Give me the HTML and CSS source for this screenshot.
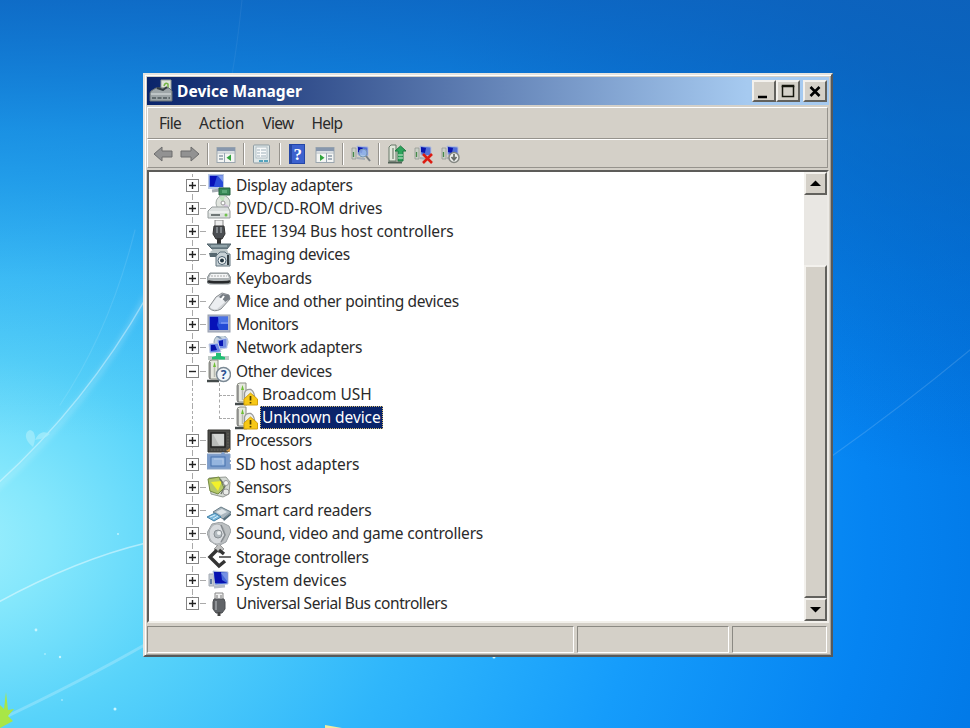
FILE: index.html
```html
<!DOCTYPE html>
<html lang="en">
<head>
<meta charset="utf-8">
<title>Device Manager</title>
<link rel="stylesheet" href="styles.css">
</head>
<body>
<svg class="wallpaper" viewBox="0 0 970 728" fill="none">
  <defs>
    <filter id="soft" x="-20%" y="-20%" width="140%" height="140%"><feGaussianBlur stdDeviation="2.5"/></filter>
    <filter id="fine" x="-20%" y="-20%" width="140%" height="140%"><feGaussianBlur stdDeviation=".6"/></filter>
  </defs>
  <g stroke="#fff" stroke-linecap="round">
    <path d="M-5 490Q90 405 145 298" stroke-opacity=".18" stroke-width="5" filter="url(#soft)"/>
    <path d="M-5 486Q85 405 146 298" stroke-opacity=".38" stroke-width="1.5" filter="url(#fine)"/>
    <path d="M60 405Q110 330 135 230" stroke-opacity=".1" stroke-width="1.2"/>
    <path d="M-5 604Q75 560 146 543" stroke-opacity=".45" stroke-width="1.5" filter="url(#fine)"/>
    <path d="M-5 722Q80 682 148 643" stroke-opacity=".22" stroke-width="3" filter="url(#fine)"/>
    <path d="M832 456Q900 408 970 350" stroke-opacity=".14" stroke-width="1.2"/>
    <path d="M232 75Q238 40 242 0" stroke-opacity=".06" stroke-width="1.2"/>
  </g>
  <g fill="#a5ecfb" fill-opacity=".75">
    <path d="M33 447C24 440 24 432 30 430C36 431 36 440 33 447Z"/>
    <path d="M35 440C39 431 45 431 50 434C46 438 41 439 35 440Z"/>
  </g>
  <g fill="#c8f6ff"><circle cx="36" cy="630" r="1.4"/><circle cx="60" cy="657" r="1.2"/><circle cx="45" cy="654" r=".8"/><circle cx="115" cy="709" r="1.5"/><circle cx="62" cy="700" r=".8"/><circle cx="118" cy="534" r=".9"/><circle cx="494" cy="657" r="1.5"/></g>
  <path d="M0 705L4 709L6 692L8 710L14 709L8 716L13 721L0 728Z" fill="#a8e647"/>
  <path d="M325 728V725L342 728Z" fill="#f3e9a0"/>
</svg>

<svg class="defs">
  <symbol id="plus" viewBox="0 0 13 13"><rect x=".5" y=".5" width="12" height="12" fill="#fff" stroke="#858585"/><path d="M3 6.5H10M6.5 3V10" stroke="#222" stroke-width="1.4"/></symbol>
  <symbol id="minus" viewBox="0 0 13 13"><rect x=".5" y=".5" width="12" height="12" fill="#fff" stroke="#858585"/><path d="M3 6.5H10" stroke="#222" stroke-width="1.4"/></symbol>
  <symbol id="tower" viewBox="0 0 24 24"><path d="M2 4Q2 1 5 1H11V20H4Q2 20 2 18Z" fill="#e6e8df" stroke="#8b8e84"/><path d="M3 3V20" stroke="#777" stroke-width="1.3"/><path d="M7.500 3L9 8H6Z" fill="#6ebe35"/><path d="M7.500 8V18" stroke="#b7bbb0" stroke-width="1.500"/><path d="M0 22H12" stroke="#444b4b" stroke-width="2.500"/></symbol>
  <symbol id="warn" viewBox="0 0 24 24"><use href="#tower"/><path d="M9.500 20V11Q11 6.500 16 7.500Q20 9.500 20 20" fill="#eceee9" stroke="#999" stroke-width="1.300"/><path d="M15.500 11L22.500 17V23H9V17Z" fill="#f7c815" stroke="#d0a010"/><path d="M15.500 14V18.500M15.500 20V21.500" stroke="#504000" stroke-width="1.700"/></symbol>
  <symbol id="pc" viewBox="0 0 20 20"><path d="M1 4H5V15H1Z" fill="#c9cfc6" stroke="#8e948e" stroke-width=".7"/><path d="M2.500 8V13" stroke="#478a4a" stroke-width="1.300"/><path d="M6 2L17 3V12L7 11Z" fill="#5471d8" stroke="#b6bfd9"/><path d="M7 3L12 4L11 9L7 8Z" fill="#0a14ad"/><path d="M6 14L14 15" stroke="#a6aeb6" stroke-width="2"/></symbol>
</svg>

<main class="window">
  <header class="titlebar">
    <svg class="app-icon" viewBox="0 0 24 24"><path d="M12 1H22V20H12Z" fill="#dfe4d8" stroke="#969d96"/><path d="M15 7Q16 3 19 5V10" stroke="#75b546" stroke-width="1.500" fill="none"/><path d="M2 12L7 9H20L23 12V22H1V14Z" fill="#9da5a7" stroke="#697174"/><path d="M8 9L14 11L18 8" stroke="#333d42" stroke-width="2" fill="none"/><path d="M2 15H22" stroke="#cad0d0" stroke-width="1.500"/><path d="M3 19H21" stroke="#606a6d" stroke-width="2" stroke-dasharray="4 1.500"/></svg>
    <h1>Device Manager</h1>
    <div class="controls">
      <span class="button"><svg viewBox="0 0 20 18"><path d="M4 15H13" stroke="#000" stroke-width="2.500"/></svg></span>
      <span class="button"><svg viewBox="0 0 20 18"><path d="M4.500 4V14.500H15.500V4" stroke="#15150d" fill="none" stroke-width="1.500"/><path d="M3.700 4H16.300" stroke="#15150d" stroke-width="2.500"/></svg></span>
      <span class="button close"><svg viewBox="0 0 20 18"><path d="M5.500 5L14.500 14M14.500 5L5.500 14" stroke="#000" stroke-width="2.600"/></svg></span>
    </div>
  </header>

  <div class="bands">
    <nav class="menu"><span>File</span><span class="action">Action</span><span>View</span><span>Help</span></nav>
    <div class="toolbar">
      <svg viewBox="0 0 20 20"><path d="M1 10L9 3V7H19V13H9V17Z" fill="#929292" stroke="#6d6d6d"/></svg>
      <svg viewBox="0 0 20 20"><path d="M19 10L11 3V7H1V13H11V17Z" fill="#929292" stroke="#6d6d6d"/></svg>
      <i></i>
      <svg viewBox="0 0 20 20"><rect x="1" y="3.500" width="18" height="15" fill="#f4f5f3" stroke="#9aa5ae"/><path d="M1 5.500H19" stroke="#8797ad" stroke-width="3.500"/><path d="M1 9H19" stroke="#b2bac2"/><path d="M3 12H7M3 15H7" stroke="#8c9aa9" stroke-width="1.300"/><path d="M8.500 9V18" stroke="#99a8b5"/><path d="M15 10.500V17L10.500 13.700Z" fill="#31a43d"/></svg>
      <i></i>
      <svg viewBox="0 0 20 20"><rect x="1.500" y="1" width="16" height="18" rx="1" fill="#dfe8e9" stroke="#8e9ca3"/><rect x="4" y="3" width="11" height="11" fill="#f8fafa" stroke="#b2bec4"/><path d="M5 6H8M9 6H14M5 9H8M9 9H14M5 12H8M9 12H14" stroke="#9fb0ba"/><path d="M7 17H11M12 17H16" stroke="#55a4bd" stroke-width="2"/></svg>
      <i></i>
      <svg viewBox="0 0 20 20"><rect x="1.500" y=".5" width="15" height="19" fill="#3d62ce" stroke="#2446a7"/><path d="M3 1V19" stroke="#2748a4" stroke-width="2"/><text x="9.700" y="16" text-anchor="middle" class="help-mark">?</text></svg>
      <svg viewBox="0 0 20 20"><rect x="1" y="3.500" width="18" height="15" fill="#f4f5f3" stroke="#9aa5ae"/><path d="M1 5.500H19" stroke="#8797ad" stroke-width="3.500"/><path d="M1 9H19" stroke="#b2bac2"/><path d="M13 12H17M13 15H17" stroke="#8c9aa9" stroke-width="1.300"/><path d="M11.500 9V18" stroke="#99a8b5"/><path d="M5 10.500V17L9.500 13.700Z" fill="#31a43d"/></svg>
      <i></i>
      <svg viewBox="0 0 20 20"><use href="#pc"/><circle cx="12" cy="9" r="4" fill="#a6c7ec" fill-opacity=".75" stroke="#7597b6"/><path d="M15 12L19 17" stroke="#777e82" stroke-width="2"/></svg>
      <i></i>
      <svg viewBox="0 0 20 20"><path d="M2 3L4 1H9V17H2Z" fill="#e2e8dc" stroke="#667969"/><path d="M6 4V15" stroke="#9eaa9b" stroke-width="2"/><path d="M1 18.500H15" stroke="#516056" stroke-width="2"/><path d="M13.500 2L19 7H16V17H11V7H8Z" fill="#2da45c" stroke="#1c7941"/><path d="M11 11H16M11 14H16" stroke="#d4ead6"/></svg>
      <svg viewBox="0 0 20 20"><use href="#pc"/><path d="M9 10L18 19M18 10L9 19" stroke="#dc1c12" stroke-width="2.600"/></svg>
      <svg viewBox="0 0 20 20"><use href="#pc"/><circle cx="13" cy="13.500" r="5" fill="#ecedea" stroke="#858883" stroke-width="1.500"/><path d="M13 10V15M10.500 13L13 16L15.500 13" stroke="#656965" stroke-width="1.700" fill="none"/></svg>
    </div>
  </div>

  <section class="content">
    <ul class="tree">
      <li><svg class="box"><use href="#plus"/></svg><svg class="icon" viewBox="0 0 24 24"><path d="M1 1H17V16H1Z" fill="#bac9e4"/><path d="M2.500 2.500H16V14H2.500Z" fill="#294bd8"/><path d="M3 3H10L7 13H3Z" fill="#0710b9"/><path d="M11 3H16V9Z" fill="#809bed"/><path d="M5 18L13 17" stroke="#a6adb5" stroke-width="3"/><path d="M12 15H23V22H12Z" fill="#378854" stroke="#24613c"/><path d="M15 17H20V20H15Z" fill="#5aa776"/></svg><span>Display adapters</span></li>
      <li class="wide"><svg class="box"><use href="#plus"/></svg><svg class="icon" viewBox="0 0 24 24"><ellipse cx="16" cy="7" rx="7" ry="7.500" fill="#e1e5df" stroke="#a2aaa6"/><path d="M16 7L12 1L18 0Z" fill="#bfe3bc"/><path d="M16 7L22 10L18 14Z" fill="#d6c9df"/><circle cx="16" cy="7" r="2" fill="#fff" stroke="#999"/><path d="M5 11H21L23 15V22H1V15Z" fill="#dce0df" stroke="#969c9c"/><path d="M2 16H22" stroke="#fff"/><path d="M4 19H13" stroke="#707777" stroke-width="2"/><circle cx="19" cy="19" r="1.500" fill="#6fc24c"/></svg><span>DVD/CD-ROM drives</span></li>
      <li class="wide"><svg class="box"><use href="#plus"/></svg><svg class="icon" viewBox="0 0 24 24"><path d="M8 0H16V7H8Z" fill="#eee" stroke="#888"/><path d="M7 6H17L18 14L15 19H9L6 14Z" fill="#4b4e52" stroke="#333"/><path d="M10 7V13M14 7V13" stroke="#94999d" stroke-width="1.500"/><path d="M12 18V24" stroke="#333" stroke-width="4"/></svg><span>IEEE 1394 Bus host controllers</span></li>
      <li><svg class="box"><use href="#plus"/></svg><svg class="icon" viewBox="0 0 24 24"><path d="M0 1H24L20 6H5Z" fill="#71838b" stroke="#53656d"/><path d="M4 3H20" stroke="#afc1c5"/><path d="M3 9L7 6H20L22 12H5Z" fill="#bdc7c9"/><path d="M2 10H10V14H3Z" fill="#566870"/><path d="M10 12L13 9H18L20 11H23V23H9V13Z" fill="#c7d1d6" stroke="#62747e"/><path d="M21 12V22" stroke="#323d43" stroke-width="2"/><circle cx="15" cy="17.500" r="4" fill="#f2f5f5" stroke="#4b6170"/><circle cx="15" cy="17.500" r="2" fill="#22343f"/></svg><span>Imaging devices</span></li>
      <li class="wide"><svg class="box"><use href="#plus"/></svg><svg class="icon" viewBox="0 0 24 24"><path d="M3 7H21L24 12V16Q24 18 21 18H3Q0 18 0 15V12Z" fill="#aeb3b5" stroke="#8c9396"/><path d="M4 8H20L22 12H2Z" fill="#f4f5f6"/><path d="M4 10H20" stroke="#aaa" stroke-dasharray="2 1"/><path d="M1 15Q3 17 21 16L23 15" stroke="#27292b" stroke-width="2.500" fill="none"/></svg><span>Keyboards</span></li>
      <li><svg class="box"><use href="#plus"/></svg><svg class="icon" viewBox="0 0 24 24"><path d="M2 18L9 8L15 4L22 6L23 10L14 20Q7 24 2 19Z" fill="#d2d5d8" stroke="#898d91"/><path d="M15 5L22 6L23 10L18 13L12 8Z" fill="#777d83"/><path d="M10 8Q16 9 18 13L10 20Q5 21 3 18Z" fill="#eceef1"/><path d="M14 11L17 7" stroke="#fff" stroke-width="2"/></svg><span>Mice and other pointing devices</span></li>
      <li class="narrow"><svg class="box"><use href="#plus"/></svg><svg class="icon" viewBox="0 0 24 24"><rect x="1" y="2" width="22" height="17" fill="#b2b9cb" stroke="#989fae"/><path d="M2.500 3.500H21V17H2.500Z" fill="#234bd6"/><path d="M3 4H12L10 12L12 17H3Z" fill="#0611b8"/><path d="M11 4H21V11H12Z" fill="#4a72e4"/><path d="M14 9H21V11H14Z" fill="#6d8df0"/></svg><span>Monitors</span></li>
      <li><svg class="box"><use href="#plus"/></svg><svg class="icon" viewBox="0 0 24 24"><circle cx="14" cy="6" r="7" fill="#c8d5de" stroke="#91a4b4"/><path d="M10 0Q19 5 19 12" stroke="#7f95b0" stroke-width="2" fill="none"/><path d="M10 4L20 2V12L11 13Z" fill="#748fe3" stroke="#c3cfec"/><path d="M12 5L16 4V10H12Z" fill="#0616b5"/><path d="M2 8L11 7L14 16L3 17Z" fill="#6d89e7" stroke="#c6cfe1"/><path d="M4 9L8 9L10 14L4 15Z" fill="#0713aa"/><path d="M1 22H22" stroke="#c0c9c6" stroke-width="4"/><path d="M5 23.500V21L9 20V17H14V20L18 21V23.500Z" fill="#22bf74"/></svg><span>Network adapters</span></li>
      <li><svg class="box"><use href="#minus"/></svg><svg class="icon" viewBox="0 0 24 24"><use href="#tower"/><circle cx="16.500" cy="15.500" r="7" fill="#f1f6fa" stroke="#7b8994" stroke-width="1.500"/><text x="16.500" y="20" text-anchor="middle" class="question">?</text></svg><span>Other devices</span></li>
      <li class="child wide"><svg class="icon" viewBox="0 0 24 24"><use href="#warn"/></svg><span>Broadcom USH</span></li>
      <li class="child last wide"><svg class="icon" viewBox="0 0 24 24"><use href="#warn"/></svg><span class="selected">Unknown device</span></li>
      <li><svg class="box"><use href="#plus"/></svg><svg class="icon" viewBox="0 0 24 24"><path d="M1 1H23V21L21 23H1Z" fill="#4a4a47" stroke="#343431"/><path d="M4 4H18V18H4Z" fill="#b9bbb9" stroke="#20201f" stroke-width="1.500"/><path d="M6 5H17V16H12Z" fill="#d2d4d2"/><path d="M4 21H20M21 4V19" stroke="#68665c" stroke-dasharray="1.500 1.500"/><path d="M19 22L23 19V23Z" fill="#d39b4e"/></svg><span>Processors</span></li>
      <li class="wide"><svg class="box"><use href="#plus"/></svg><svg class="icon" viewBox="0 0 24 24"><path d="M0 2H14L16 0L18 2H23V6L22 7L24 9L22 11L24 13V17H0Z" fill="#7c9dcc" stroke="#8ba4c6"/><rect x="4" y="5" width="14" height="9" fill="#95b5df" stroke="#4773ad"/><path d="M7 7H16V12" stroke="#b5cce9" fill="none"/></svg><span>SD host adapters</span></li>
      <li><svg class="box"><use href="#plus"/></svg><svg class="icon" viewBox="0 0 24 24"><path d="M2 3L19 2L23 7L22 19L16 22L4 19Z" fill="#d3d8d2" stroke="#949a94"/><path d="M1 4L12 2L17 13L11 19L3 16Z" fill="#b4c769" stroke="#758a42"/><path d="M4 7L15 6L11 16Z" fill="#f2f12b"/><path d="M13 4L18 11L14 19" stroke="#6e7868" stroke-width="1.500" fill="none"/><circle cx="19" cy="8" r="2.500" fill="#f5f6f4" stroke="#999"/><circle cx="19" cy="17" r="3" fill="#e9ebe7" stroke="#999"/></svg><span>Sensors</span></li>
      <li class="mid"><svg class="box"><use href="#plus"/></svg><svg class="icon" viewBox="0 0 24 24"><path d="M6 13L14 8L24 13L16 20Z" fill="#aab7bf" stroke="#687c87"/><path d="M9 13L15 10L20 13L14 16Z" fill="#dfe6e9"/><path d="M16 20L24 14V16L17 22Z" fill="#536b78"/><path d="M0 18L8 14L14 18L7 22Z" fill="#7bb8dc" stroke="#4180a7"/><path d="M3 18L8 16M6 20L11 17" stroke="#d7effa"/></svg><span>Smart card readers</span></li>
      <li class="mid"><svg class="box"><use href="#plus"/></svg><svg class="icon" viewBox="0 0 24 24"><path d="M5 2L14 0L22 4L24 9L19 20L11 24L3 19L0 11Z" fill="#bcc0c2" stroke="#999ea1"/><ellipse cx="10" cy="12" rx="8" ry="10" fill="#d7dadd" stroke="#adb1b4"/><path d="M14 3L18 13L14 20" stroke="#858a8e" stroke-width="1.500" fill="none"/><circle cx="11" cy="12" r="4" fill="#b3babf" stroke="#888e92"/><circle cx="12" cy="11" r="2" fill="#eef0f1"/></svg><span>Sound, video and game controllers</span></li>
      <li><svg class="box"><use href="#plus"/></svg><svg class="icon" viewBox="0 0 24 24"><path d="M12 -1L17 4L12 8L7 4Z" fill="#bfc0bf" stroke="#999"/><path d="M10 5L3 12L12 21L18 16M12 5L17 9" fill="none" stroke="#343434" stroke-width="3.500"/><path d="M12 12H24" stroke="#555" stroke-width="1.700"/></svg><span>Storage controllers</span></li>
      <li class="wider"><svg class="box"><use href="#plus"/></svg><svg class="icon" viewBox="0 0 24 24"><path d="M2 6H7V18H2Z" fill="#c5cbd2" stroke="#a4abb4"/><path d="M4 11V16" stroke="#637da3" stroke-width="2"/><path d="M6 3L21 4V16L8 17Z" fill="#4568d8" stroke="#bac4da"/><path d="M7 4L14 4L15 12L20 15L8 15Z" fill="#0812b0"/><path d="M14 5L20 5V13Z" fill="#7591e4"/><path d="M7 19L18 18" stroke="#b4bdc9" stroke-width="3"/></svg><span>System devices</span></li>
      <li class="narrow"><svg class="box"><use href="#plus"/></svg><svg class="icon" viewBox="0 0 24 24"><path d="M8 1H16V8H8Z" fill="#eee" stroke="#888"/><path d="M10 3V6M14 3V6" stroke="#777"/><path d="M7 7H17L18 10V17L15 21H9L6 17V10Z" fill="#606367" stroke="#4c4f52"/><path d="M9 9V18" stroke="#909397" stroke-width="2"/><path d="M12 20V24" stroke="#444" stroke-width="3"/></svg><span>Universal Serial Bus controllers</span></li>
    </ul>
    <div class="scrollbar">
      <span class="button arrow"><svg viewBox="0 0 19 19"><path d="M4 12L9.500 6.500L15 12Z"/></svg></span>
      <div class="track"></div>
      <div class="button thumb"></div>
      <span class="button arrow"><svg viewBox="0 0 19 19"><path d="M4 7L9.500 12.500L15 7Z"/></svg></span>
    </div>
  </section>
  <footer class="status"><span></span><span></span><span></span></footer>
</main>
</body>
</html>
```
FILE: styles.css
```css
* { box-sizing: border-box; }

body {
  margin: 0;
  width: 970px;
  height: 728px;
  padding: 73px 0 0 143px;
  overflow: hidden;
  font: 15.5px/23px "Noto Sans", sans-serif;
  color: #2a2a2a;
  background:
    linear-gradient(180deg, rgba(14, 100, 190, .85) 0, rgba(14, 116, 204, .5) 18%, rgba(14, 130, 215, .18) 38%, rgba(8, 120, 214, 0) 60%),
    radial-gradient(ellipse 560px 500px at 1000px -20px, rgba(0, 68, 150, .75) 0, rgba(0, 76, 170, .4) 50%, rgba(0, 80, 180, 0) 100%),
    radial-gradient(ellipse 1120px 860px at -50px 540px, #a0f0fd 0, #84e7fc 9%, #58d3fa 22%, #2fb6fb 42%, #159cfb 62%, #0584f2 82%, #0074e2 100%);
}

.wallpaper { position: absolute; inset: 0; width: 970px; height: 728px; }
.defs { position: absolute; width: 0; height: 0; }

.window {
  position: relative;
  display: flex;
  flex-direction: column;
  width: 690px;
  height: 584px;
  padding: 2px;
  background: #d4d0c8;
  border: 2px solid;
  border-color: #e6e4df #57595a #57595a #e6e4df;
  box-shadow: inset 1px 1px #fff, inset -1px -1px #a5a39d;
}

.titlebar {
  display: flex;
  align-items: center;
  height: 28px;
  padding: 0 2px;
  background: linear-gradient(90deg, #0a246a, #a6caf0 88%);
}
.app-icon { width: 24px; height: 24px; }
h1 { flex: 1; margin: 0 0 0 4px; color: #fff; font: bold 15.5px/26px "Noto Sans", sans-serif; letter-spacing: .05px; }
.controls { display: flex; }
.controls .button { width: 24px; height: 22px; }
.controls .close { margin-left: 3px; }
.controls svg { display: block; width: 20px; height: 18px; }

.button {
  background: #d4d0c8;
  border: 2px solid;
  border-color: #f3f1ed #62615d #62615d #f3f1ed;
}

.bands { margin: 2px 1px 0 0; }
.menu, .toolbar {
  display: flex;
  border: 1px solid;
  border-color: #fff #96938d #96938d #fff;
}
.menu { height: 32px; gap: 18px; padding: 4px 11px; letter-spacing: -.7px; }
.menu .action { letter-spacing: -.1px; }
.toolbar { height: 29px; align-items: center; gap: 7px; padding: 0 5px; }
.toolbar svg { width: 20px; height: 20px; }
.toolbar i { width: 2px; height: 22px; border-left: 1px solid #96938d; border-right: 1px solid #fff; }
.help-mark { font: bold 17px "Liberation Serif", serif; fill: #fff; }
.question { font: bold 12px "Noto Sans", sans-serif; fill: #2b4f91; }

.content {
  display: flex;
  height: 453px;
  margin-top: 2px;
  background: #fff;
  border: 2px solid;
  border-color: #5d5c59 #edebe7 #f2f0eb #5d5c59;
}
.tree { flex: 1; margin: 0; padding: 1.5px 0 0 37px; list-style: none; overflow: hidden; }
.tree li {
  position: relative;
  display: flex;
  align-items: center;
  height: 23.25px;
  white-space: nowrap;
  letter-spacing: -.31px;
}
.tree .mid { letter-spacing: -.2px; }
.tree .wide { letter-spacing: -.07px; }
.tree .wider { letter-spacing: .05px; }
.tree .narrow { letter-spacing: -.45px; }
.tree li::before {
  content: "";
  position: absolute;
  left: 6px;
  top: 0;
  height: 100%;
  border-left: 1px dashed #aaa;
}
.tree li:last-child::before { height: 50%; }
.box { z-index: 1; width: 13px; height: 13px; }
.icon { width: 24px; height: 24px; margin: 0 5px 0 8px; flex: none; }
.tree li:not(.child)::after { content: ""; position: absolute; left: 14px; top: 11px; width: 6px; border-top: 1px dashed #aaa; }
.child .icon { margin: 0 1px 0 49px; }
.child span { padding: 0 2px; }
.child::after {
  content: "";
  position: absolute;
  left: 33px;
  top: 0;
  width: 14px;
  height: 12px;
  border-left: 1px dashed #aaa;
  border-bottom: 1px dashed #aaa;
}
.child.last::after { top: -12px; height: 24px; }
.tree .selected { background: #0a246a; color: #fff; outline: 1px dotted #d7bd70; outline-offset: -1px; }

.scrollbar { display: flex; flex-direction: column; width: 23px; background: #e9e7e3; }
.arrow { height: 23px; }
.arrow svg { display: block; width: 19px; height: 19px; fill: #000; }
.track { height: 70px; }
.thumb { flex: 1; }

.status { display: flex; gap: 3px; height: 27px; margin: 3px 2px 0 0; }
.status span { border: 1px solid; border-color: #8b8983 #fff #fff #8b8983; }
.status span:nth-child(1) { width: 427px; }
.status span:nth-child(2) { width: 152px; }
.status span:nth-child(3) { flex: 1; }
```
